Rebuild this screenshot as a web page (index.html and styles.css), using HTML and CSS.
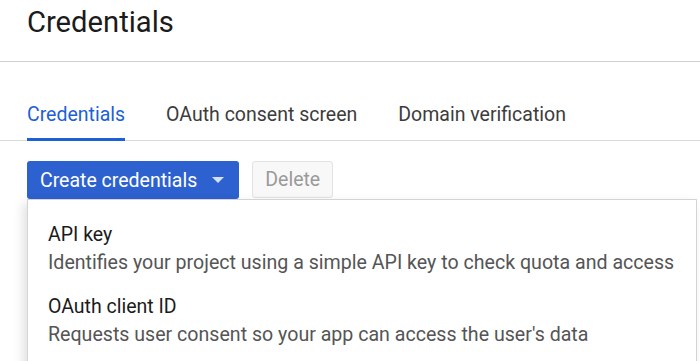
FILE: index.html
```html
<!DOCTYPE html>
<html lang="en">
<head>
    <meta charset="UTF-8">
    <meta name="viewport" content="width=device-width, initial-scale=1.0">
    <title>Credentials</title>
    <link rel="stylesheet" href="styles.css">
</head>
<body>
    <div class="page-header">
        <h1>Credentials</h1>
    </div>

    <div class="tabs">
        <div class="tab active">Credentials</div>
        <div class="tab">OAuth consent screen</div>
        <div class="tab">Domain verification</div>
    </div>

    <div class="toolbar">
        <button class="btn-create">
            Create credentials
            <span class="caret"></span>
        </button>
        <button class="btn-delete" disabled>Delete</button>
    </div>

    <div class="menu-row">
        <div class="menu">
            <div class="menu-item">
                <div class="item-title">API key</div>
                <div class="item-desc">Identifies your project using a simple API key to check quota and access</div>
            </div>
            <div class="menu-item">
                <div class="item-title">OAuth client ID</div>
                <div class="item-desc">Requests user consent so your app can access the user's data</div>
            </div>
        </div>
        <span class="more-dots">&#8942;</span>
    </div>
</body>
</html>
```

FILE: styles.css
```css
body {
    font-family: Roboto, "Noto Sans", Arial, sans-serif;
    margin: 0;
    background-color: #fff;
    color: #202124;
}

.page-header {
    padding: 4px 27px 21px;
    border-bottom: 1px solid #cfcfcf;
}

h1 {
    margin: 0;
    font-size: 29.2px;
    font-weight: 400;
    line-height: 36px;
    color: #1b1b1b;
}

.tabs {
    display: flex;
    gap: 41px;
    margin-top: 41px;
    padding: 0 27px;
    border-bottom: 1px solid #dadada;
}

.tab {
    font-size: 19.5px;
    line-height: 24px;
    padding-bottom: 11px;
    border-bottom: 3px solid transparent;
    color: #3c3c3c;
    margin-bottom: -1px;
}

.tab.active {
    color: #1d5fd6;
    border-bottom-color: #1d5fd6;
}

.toolbar {
    display: flex;
    align-items: flex-start;
    gap: 13px;
    margin-top: 20px;
    padding: 0 27px;
}

.btn-create {
    display: flex;
    align-items: center;
    gap: 15px;
    height: 38px;
    padding: 0 15px 0 13px;
    background-color: #2d61cf;
    color: #fff;
    border: none;
    border-radius: 3px;
    font-family: inherit;
    font-size: 19.5px;
    cursor: pointer;
}

.caret {
    width: 0;
    height: 0;
    border-left: 6px solid transparent;
    border-right: 6px solid transparent;
    border-top: 6px solid #d6e0f5;
}

.btn-delete {
    height: 37px;
    padding: 0 12px;
    background-color: #f8f8f8;
    color: #9a9a9a;
    border: 1px solid #e2e2e2;
    border-radius: 3px;
    font-family: inherit;
    font-size: 19.5px;
}

.menu-row {
    display: flex;
    align-items: flex-start;
    padding-left: 27px;
}

.menu {
    flex: none;
    width: 670px;
    height: 200px;
    background: #fff;
    border: 1px solid #d4d4d4;
    box-shadow: -4px 4px 10px rgba(0,0,0,0.12);
    padding: 21px 0 0 20px;
    box-sizing: border-box;
}

.more-dots {
    margin-top: 34px;
    color: #777;
    font-size: 16px;
    line-height: 20px;
}

.menu-item {
    margin-bottom: 16px;
}

.item-title {
    font-size: 19.5px;
    line-height: 28px;
    color: #1b1b1b;
}

.item-desc {
    font-size: 19.6px;
    line-height: 28px;
    color: #555;
}
```
